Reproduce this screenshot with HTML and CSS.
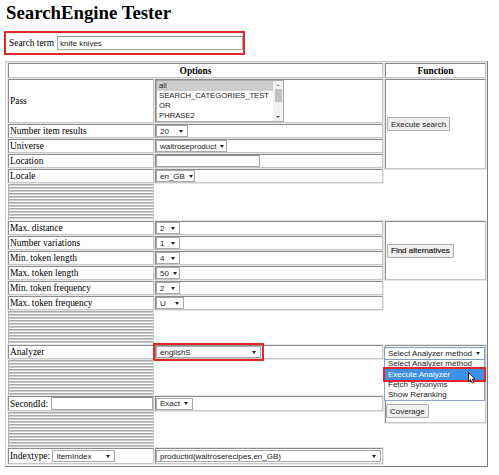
FILE: index.html
```html
<!DOCTYPE html>
<html>
<head>
<meta charset="utf-8">
<title>SearchEngine Tester</title>
<link rel="stylesheet" href="styles.css">
</head>
<body>
<h1 class="title">SearchEngine Tester</h1>
<div class="search-box">
  <span class="lbl">Search term</span>
  <span class="input search-input">knife knives</span>
</div>
<div class="outer">
  <div class="options">
    <div class="cell head">Options</div>
    <div class="row row-pass">
      <div class="cell label">Pass</div>
      <div class="cell value">
        <div class="listbox">
          <div class="lb-items">
            <div class="lb-item selected">all</div>
            <div class="lb-item">SEARCH_CATEGORIES_TEST</div>
            <div class="lb-item">OR</div>
            <div class="lb-item">PHRASE2</div>
          </div>
          <div class="scrollbar"><span class="sb-up"></span><span class="sb-thumb"></span><span class="sb-fill"></span><span class="sb-down"></span></div>
        </div>
      </div>
    </div>
    <div class="row">
      <div class="cell label">Number item results</div>
      <div class="cell value"><span class="sel w32">20<i class="arrow"></i></span></div>
    </div>
    <div class="row">
      <div class="cell label">Universe</div>
      <div class="cell value"><span class="sel w71">waitroseproduct<i class="arrow"></i></span></div>
    </div>
    <div class="row">
      <div class="cell label">Location</div>
      <div class="cell value"><span class="input loc-input"></span></div>
    </div>
    <div class="row">
      <div class="cell label">Locale</div>
      <div class="cell value"><span class="sel w39">en_GB<i class="arrow"></i></span></div>
    </div>
    <div class="stripes s36"></div>
    <div class="row">
      <div class="cell label">Max. distance</div>
      <div class="cell value"><span class="sel w24">2<i class="arrow"></i></span></div>
    </div>
    <div class="row">
      <div class="cell label">Number variations</div>
      <div class="cell value"><span class="sel w24">1<i class="arrow"></i></span></div>
    </div>
    <div class="row">
      <div class="cell label">Min. token length</div>
      <div class="cell value"><span class="sel w24">4<i class="arrow"></i></span></div>
    </div>
    <div class="row">
      <div class="cell label">Max. token length</div>
      <div class="cell value"><span class="sel w24">50<i class="arrow"></i></span></div>
    </div>
    <div class="row">
      <div class="cell label">Min. token frequency</div>
      <div class="cell value"><span class="sel w24">2<i class="arrow"></i></span></div>
    </div>
    <div class="row">
      <div class="cell label">Max. token frequency</div>
      <div class="cell value"><span class="sel w28">U<i class="arrow"></i></span></div>
    </div>
    <div class="stripes s33"></div>
    <div class="row">
      <div class="cell label">Analyzer</div>
      <div class="cell value"><span class="sel w105 marked">englishS<i class="arrow"></i></span></div>
    </div>
    <div class="stripes s35"></div>
    <div class="row row-second">
      <div class="cell label">SecondId: <span class="input second-input"></span></div>
      <div class="cell value"><span class="sel w37">Exact<i class="arrow"></i></span></div>
    </div>
    <div class="stripes s35"></div>
    <div class="row row-last">
      <div class="cell label">Indextype: <span class="sel w63">ItemIndex<i class="arrow"></i></span></div>
      <div class="cell value"><span class="sel w225">productid(waitroserecipes,en_GB)<i class="arrow"></i></span></div>
    </div>
  </div>
  <div class="func">
    <div class="cell head">Function</div>
    <div class="cell fcell fcell1"><span class="btn">Execute search</span></div>
    <div class="cell fcell fcell2"><span class="btn bold">Find alternatives</span></div>
    <div class="cell fcell3">
      <span class="sel analyzer-sel">Select Analyzer method<i class="arrow"></i></span>
      <div class="dropdown">
        <div class="dd-item dd-first">Select Analyzer method</div>
        <div class="dd-item dd-active">Execute Analyzer
          <svg class="cursor" width="8" height="12" viewBox="0 0 8 12"><path d="M0.5 0.5 L0.5 9.5 L2.6 7.6 L4.2 11 L5.7 10.3 L4.2 7.1 L7 7.1 Z" fill="#fff" stroke="#000" stroke-width="0.8" stroke-linejoin="round"/></svg>
        </div>
        <div class="dd-item">Fetch Synonyms</div>
        <div class="dd-item">Show Reranking</div>
      </div>
      <span class="btn cov">Coverage</span>
    </div>
  </div>
</div>
</body>
</html>
```
FILE: styles.css
```css
body {
  margin: 0;
  font-family: "Liberation Serif", "Times New Roman", serif;
  color: #000;
  background: #fff;
}
.title {
  margin: 2px 0 0 6px;
  font-size: 18.8px;
  line-height: 22px;
  font-weight: bold;
}
.search-box {
  margin: 7px 0 0 4px;
  width: 241px;
  height: 24px;
  box-sizing: border-box;
  border: 2px solid #e3262b;
  display: flex;
  align-items: center;
  padding: 0 1px 0 3px;
  font-size: 9.4px;
}
.lbl {
  white-space: nowrap;
  flex: none;
}
.input {
  box-sizing: border-box;
  border: 1px solid #a9a9a9;
  border-top-color: #8f8f8f;
  background: #fff;
  font: 8px "Liberation Sans", Arial, sans-serif;
  color: #222;
  display: inline-flex;
  align-items: center;
  padding-left: 2px;
  flex: none;
}
.search-input {
  margin-left: 3px;
  width: 186px;
  height: 14px;
}
.loc-input {
  width: 104px;
  height: 12px;
}
.second-input {
  width: 102px;
  height: 13px;
  margin-left: 1px;
}
.outer {
  margin: 6px 0 0 5px;
  width: 483px;
  box-sizing: border-box;
  border: 1px solid;
  border-color: #cdcdcd #7c7c7c #7c7c7c #cdcdcd;
  padding: 1px 1px 2px 2px;
  display: flex;
  gap: 2px;
  align-items: flex-start;
}
.options {
  width: 375px;
  display: flex;
  flex-direction: column;
}
.func {
  width: 101px;
  display: flex;
  flex-direction: column;
}
.cell {
  box-sizing: border-box;
  border: 1px solid;
  border-color: #8c8c8c #c6c6c6 #c6c6c6 #8c8c8c;
  box-shadow: 0 0 0 1px #e6e6e6;
}
.head {
  height: 15px;
  margin-bottom: 1px;
  font-weight: bold;
  font-size: 9.4px;
  display: flex;
  align-items: center;
  justify-content: center;
}
.row {
  display: flex;
  gap: 1px;
  height: 14px;
  margin-bottom: 1px;
}
.row-pass {
  height: 44px;
}
.row-second {
  height: 15px;
}
.row-last {
  height: 16px;
  margin-bottom: 0;
}
.label {
  width: 146px;
  display: flex;
  align-items: center;
  padding-left: 1px;
  font-size: 9.4px;
  white-space: pre;
}
.value {
  width: 228px;
  display: flex;
  align-items: center;
}
.stripes {
  width: 146px;
  box-sizing: border-box;
  margin-bottom: 1px;
  border-left: 1px solid #b4b4b4;
  border-right: 1px solid #cfcfcf;
  background: repeating-linear-gradient(to bottom, #a8a8a8 0, #a8a8a8 1px, #cbcbcb 1px, #cbcbcb 2px, #fbfbfb 2px, #fbfbfb 3px);
}
.s36 { height: 36px; }
.s33 { height: 33px; }
.s35 { height: 35px; }

.listbox {
  width: 128px;
  height: 42px;
  box-sizing: border-box;
  border: 1px solid #a9a9a9;
  display: flex;
  background: #fff;
}
.lb-items {
  flex: 1;
  min-width: 0;
  font: 7.7px "Liberation Sans", Arial, sans-serif;
  color: #222;
}
.lb-item {
  height: 10px;
  line-height: 10px;
  padding-left: 2px;
  white-space: nowrap;
  overflow: hidden;
}
.lb-item.selected {
  background: #cdcdcd;
}
.scrollbar {
  width: 10px;
  flex: none;
  background: #f1f1f1;
  display: flex;
  flex-direction: column;
  align-items: center;
}
.sb-up, .sb-down {
  height: 8px;
  width: 10px;
  position: relative;
  flex: none;
}
.sb-up::after, .sb-down::after {
  content: "";
  position: absolute;
  left: 3px;
  top: 3px;
  border-left: 2px solid transparent;
  border-right: 2px solid transparent;
}
.sb-up::after { border-bottom: 2px solid #a3a3a3; }
.sb-down::after { border-top: 2px solid #505050; }
.sb-thumb {
  width: 7px;
  height: 13px;
  background: #c1c1c1;
  flex: none;
}
.sb-fill { flex: 1; }

.sel {
  box-sizing: border-box;
  height: 12px;
  border: 1px solid #a9a9a9;
  background: #fff;
  font: 8px "Liberation Sans", Arial, sans-serif;
  color: #222;
  display: inline-flex;
  align-items: center;
  justify-content: space-between;
  padding: 0 4px 0 3px;
  white-space: nowrap;
  flex: none;
}
.arrow {
  width: 0;
  height: 0;
  border-left: 2.5px solid transparent;
  border-right: 2.5px solid transparent;
  border-top: 3px solid #222;
  margin-left: 4px;
}
.w24 { width: 24px; }
.w28 { width: 28px; }
.w32 { width: 32px; }
.w37 { width: 37px; }
.w39 { width: 39px; }
.w63 { width: 63px; }
.w71 { width: 71px; }
.w105 { width: 105px; }
.w225 { width: 225px; }
.marked {
  outline: 2px solid #e3262b;
  outline-offset: 1px;
}

.fcell {
  display: flex;
  align-items: center;
  padding-left: 1px;
}
.fcell1 { height: 90px; }
.fcell2 { height: 59px; margin-top: 52px; }
.fcell3 {
  height: 78px;
  margin-top: 65px;
  padding-top: 1px;
  display: flex;
  flex-direction: column;
  align-items: flex-start;
}
.btn {
  box-sizing: border-box;
  height: 14px;
  border: 1px solid #adadad;
  border-radius: 1px;
  background: #efefef;
  font: 8px "Liberation Sans", Arial, sans-serif;
  color: #222;
  padding: 0 3px;
  display: inline-flex;
  align-items: center;
  white-space: nowrap;
}
.bold {
  color: #111;
  -webkit-text-stroke: 0.2px #333;
}
.analyzer-sel {
  width: 101px;
  height: 13px;
  margin-left: -2px;
  border-color: #7c9ccc;
}
.dropdown {
  width: 101px;
  margin-left: -2px;
  box-sizing: border-box;
  border: 1px solid #8aa4cc;
  border-top: none;
  background: #fff;
  font: 8px "Liberation Sans", Arial, sans-serif;
  color: #222;
}
.dd-item {
  height: 10px;
  line-height: 10px;
  padding-left: 3px;
  white-space: nowrap;
}
.dd-first {
  height: 9px;
  line-height: 8px;
  overflow: hidden;
}
.dd-active {
  position: relative;
  height: 11px;
  line-height: 11px;
  background: #3f91e8;
  color: #fff;
  outline: 2px solid #e3262b;
}
.cursor {
  position: absolute;
  left: 83px;
  top: 3px;
}
.cov {
  margin-top: 3px;
}
```
